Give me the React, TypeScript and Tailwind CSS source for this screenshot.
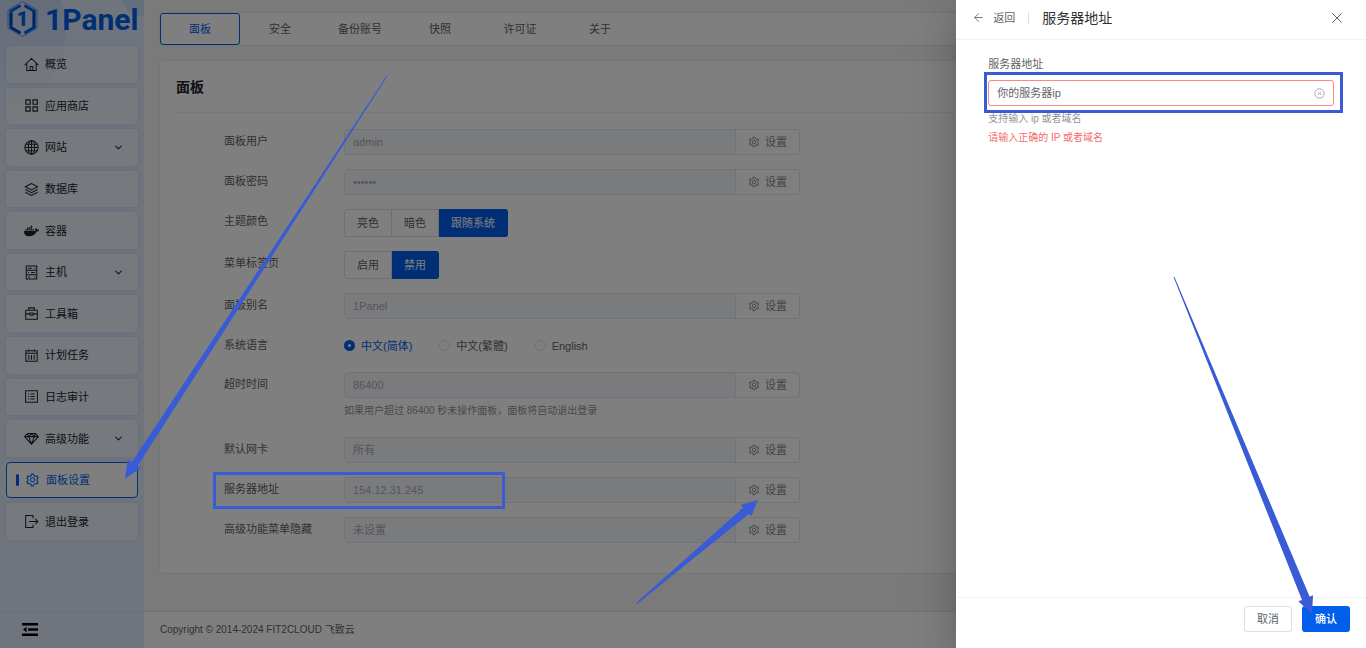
import React from 'react';
import { clsx } from 'clsx';
import { FaDocker } from 'react-icons/fa';
import { AiOutlineSetting } from 'react-icons/ai';
import { ArrowLeft, ChevronDown, X } from 'lucide-react';

const font = "font-['Liberation_Sans','Noto_Sans_CJK_SC',sans-serif]";

function Icon({ children, size = 15 }: { children: React.ReactNode; size?: number }) {
  return (
    <svg width={size} height={size} viewBox="0 0 16 16" fill="none" stroke="currentColor" strokeWidth="1.1" aria-hidden="true">
      {children}
    </svg>
  );
}

const icons: Record<string, React.ReactNode> = {
  home: <Icon><path d="M.7 8.6 8 1.6l7.3 7M3 7v7.4h10V7M6.6 14.2v-4h2.8v4" /></Icon>,
  apps: <Icon><path d="M2 2h4.6v4.6H2zM9.6 2h4.6v4.6H9.6zM2 9.4h4.6V14H2zM9.6 9.4h4.6V14H9.6z" strokeWidth="1.2" /></Icon>,
  site: (
    <Icon>
      <circle cx="8" cy="8" r="7.1" />
      <ellipse cx="8" cy="8" rx="3.4" ry="7.1" />
      <path d="M8 1v14M1 8h14M2 4.6h12M2 11.4h12" />
    </Icon>
  ),
  db: <Icon><path d="M8 1.6 1.4 5 8 8.4 14.6 5zM1.4 8 8 11.4 14.6 8M1.4 11 8 14.4 14.6 11" /></Icon>,
  docker: <FaDocker size={16} />,
  host: (
    <Icon>
      <path d="M2.4 1h11.2v14H2.4zM2.4 5.7h11.2M2.4 10.3h11.2M4.4 3.4h4M7.6 8h4M4.4 12.7h2M11 3.4h1M4.4 8h1M11 12.7h1" />
    </Icon>
  ),
  tools: (
    <Icon>
      <path d="M5 4.6V2h6v2.6M1.8 4.6h12.4v9.6H1.8zM1.8 8.4h4.6M9.6 8.4h4.6M6.4 7.4h3.2v2.4H6.4z" />
    </Icon>
  ),
  cron: <Icon><path d="M2 3h12v11.2H2zM2 5.6h12M5 1.6V4M11 1.6V4M5.2 7.4v5M8 7.4v5M10.8 7.4v5" /></Icon>,
  log: <Icon><path d="M1.7 1.8h12.6v12.4H1.7zM7 5.4h4.4M7 8h4.4M7 10.6h4.4M4.4 5.4h1.2M4.4 8h1.2M4.4 10.6h1.2" /></Icon>,
  pro: <Icon><path d="M3.6 2.6h8.8L15.4 6 8 14 .6 6zM.6 6h14.8M3.6 2.6 5 6l3 8 3-8 1.4-3.4M5 6l3-3.4L11 6" /></Icon>,
  setting: <AiOutlineSetting size={16} />,
  logout: <Icon><path d="M9.6 4.6V1.6H1.8v12.8h7.8v-3M5.6 8h9M12 5.2 14.8 8 12 10.8" /></Icon>,
};

const menu = [
  { label: '概览', icon: 'home' },
  { label: '应用商店', icon: 'apps' },
  { label: '网站', icon: 'site', sub: true },
  { label: '数据库', icon: 'db' },
  { label: '容器', icon: 'docker' },
  { label: '主机', icon: 'host', sub: true },
  { label: '工具箱', icon: 'tools' },
  { label: '计划任务', icon: 'cron' },
  { label: '日志审计', icon: 'log' },
  { label: '高级功能', icon: 'pro', sub: true },
  { label: '面板设置', icon: 'setting', active: true },
  { label: '退出登录', icon: 'logout' },
];

const tabs = ['面板', '安全', '备份账号', '快照', '许可证', '关于'];

function Logo() {
  return (
    <a href="#" className="flex h-[46px] items-start gap-[7px] pl-[7px] text-[#005eeb]">
      <svg width="31" height="38" viewBox="0 0 31 38" fill="none" aria-hidden="true">
        <path d="M15.5 1.5 30 10v18l-14.5 8.5L1 28V10z" stroke="#005eeb" strokeWidth=".6" />
        <path d="M17.5 5.5 27 11v16.5L17.5 33" stroke="#005eeb" strokeWidth="2.8" />
        <path d="M27 11v16.5" stroke="#0049b8" strokeWidth="2.8" />
        <path d="M13.5 5.5 4 11v14" stroke="#005eeb" strokeWidth="2.8" />
        <path d="M4 13v14.5l9.5 5.5" stroke="#0049b8" strokeWidth="2.8" />
        <text x="15.5" y="26" textAnchor="middle" fill="#005eeb" className="font-[Roboto] text-[20px] font-black">1</text>
      </svg>
      <span className="font-['Roboto',sans-serif] text-[30px] leading-10 font-bold">1Panel</span>
    </a>
  );
}

function Sidebar() {
  return (
    <aside className="relative flex w-36 shrink-0 flex-col overflow-hidden bg-[#e0e9f9]">
      <svg className="absolute inset-0" width="144" height="180" viewBox="0 0 144 180" aria-hidden="true">
        <defs>
          <linearGradient id="glow" x1="0" y1="0" x2="0" y2="1">
            <stop offset="0" stopColor="#bdd3f6" />
            <stop offset="1" stopColor="#c3d8f8" stopOpacity="0" />
          </linearGradient>
        </defs>
        <circle cx="-16" cy="30" r="82" fill="url(#glow)" />
        <circle cx="144" cy="-6" r="23" fill="#c9dcf9" />
      </svg>
      <div className="relative flex flex-1 flex-col">
        <Logo />
        <nav className="grid h-[494px] auto-rows-fr gap-[5px] px-1.5">
          {menu.map((item) => (
            <a
              key={item.label}
              href="#"
              className={clsx(
                'flex items-center rounded border pr-[13px] text-[11px]',
                item.active
                  ? 'border-[#005eeb] bg-white pl-[9px] text-[#005eeb]'
                  : 'border-transparent bg-white/40 pl-[17px] text-[#1f2329] shadow-[0_0_4px_rgba(0,94,235,0.1)]'
              )}
            >
              {item.active && <span className="mr-1.5 h-3 w-[3px] rounded-sm bg-[#005eeb]" />}
              <span className="mr-1.5 flex w-[15px] justify-center">{icons[item.icon]}</span>
              <span className="flex-1">{item.label}</span>
              {item.sub && <ChevronDown size={11} strokeWidth={2.2} />}
            </a>
          ))}
        </nav>
      </div>
      <div className="relative flex h-[37px] items-center border-t border-[#d9dee8] pl-[22px]">
        <button type="button" aria-label="折叠菜单" className="text-black">
          <svg width="16" height="14" viewBox="0 0 16 14" fill="currentColor" aria-hidden="true">
            <path d="M0 0h16v2.4H0zM6 5.3h10v2.4H6zM0 10.6h16V13H0zM4.5 3.8v5.4L1 6.5z" />
          </svg>
        </button>
      </div>
    </aside>
  );
}

function Field({ id, label, children }: { id?: string; label: string; children: React.ReactNode }) {
  return (
    <div className="mb-3.5 flex">
      <label htmlFor={id} className="w-[120px] shrink-0 leading-6 text-[#606266]">{label}</label>
      <div className="w-full max-w-[456px]">{children}</div>
    </div>
  );
}

function SettingInput({ id, label, value, type = 'text', help }: { id: string; label: string; value: string; type?: string; help?: string }) {
  return (
    <Field id={id} label={label}>
      <div className="flex h-[26px] rounded-[3px] border border-[#e4e7ed]">
        <input id={id} type={type} defaultValue={value} disabled className="min-w-0 flex-1 bg-[#f5f7fa] px-2 text-[#a8abb2]" />
        <button type="button" className="flex w-16 items-center justify-center gap-[5px] border-l border-[#e4e7ed] text-[#85888e]">
          <AiOutlineSetting size={12} />
          设置
        </button>
      </div>
      {help && <p className="h-[25px] pt-1 text-[10px] leading-[17px] text-[#909399]">{help}</p>}
    </Field>
  );
}

function Segmented({ name, label, options, value }: { name: string; label: string; options: string[]; value: string }) {
  return (
    <Field label={label}>
      <div className="flex h-7" role="radiogroup" aria-label={label}>
        {options.map((o, i) => (
          <label
            key={o}
            className={clsx(
              'relative flex items-center border-y border-r px-3',
              i === 0 && 'rounded-l-[3px] border-l',
              i === options.length - 1 && 'rounded-r-[3px]',
              o === value ? 'border-[#005eeb] bg-[#005eeb] text-white' : 'border-[#dcdfe6] text-[#606266]'
            )}
          >
            <input type="radio" name={name} defaultChecked={o === value} className="sr-only" />
            {o}
          </label>
        ))}
      </div>
    </Field>
  );
}

function Content() {
  return (
    <main className="flex min-w-0 flex-1 flex-col bg-[#f4f4f4]">
      <div className="flex-1 px-4 pt-[13px]">
        <div className="mb-4 flex h-8 rounded bg-white shadow-[0_0_3px_rgba(0,0,0,0.08)]">
          {tabs.map((t, i) => (
            <button
              key={t}
              type="button"
              className={clsx('w-20 rounded-[3px] border', i === 0 ? 'border-[#005eeb] text-[#005eeb]' : 'border-transparent text-[#606266]')}
            >
              {t}
            </button>
          ))}
        </div>
        <section className="rounded bg-white p-4 shadow-[0_0_3px_rgba(0,0,0,0.08)]">
          <h1 className="mb-4 border-b border-[#f2f2f2] pb-[15px] text-sm leading-5 font-bold text-[#1f2329]">面板</h1>
          <form className="pl-12">
            <SettingInput id="user" label="面板用户" value="admin" />
            <SettingInput id="password" label="面板密码" type="password" value="secret" />
            <Segmented name="theme" label="主题颜色" options={['亮色', '暗色', '跟随系统']} value="跟随系统" />
            <Segmented name="menuTabs" label="菜单标签页" options={['启用', '禁用']} value="禁用" />
            <SettingInput id="alias" label="面板别名" value="1Panel" />
            <Field label="系统语言">
              <div className="flex h-[25px] items-center gap-[27px]">
                {['中文(简体)', '中文(繁體)', 'English'].map((lang, i) => (
                  <label key={lang} className={clsx('flex items-center gap-1.5', i === 0 ? 'text-[#005eeb]' : 'text-[#606266]')}>
                    <input
                      type="radio"
                      name="lang"
                      defaultChecked={i === 0}
                      className="size-[11px] appearance-none rounded-full border border-[#dcdfe6] bg-white checked:border-4 checked:border-[#005eeb]"
                    />
                    {lang}
                  </label>
                ))}
              </div>
            </Field>
            <SettingInput id="timeout" label="超时时间" value="86400" help="如果用户超过 86400 秒未操作面板，面板将自动退出登录" />
            <SettingInput id="nic" label="默认网卡" value="所有" />
            <SettingInput id="address" label="服务器地址" value="154.12.31.245" />
            <SettingInput id="hidden" label="高级功能菜单隐藏" value="未设置" />
          </form>
        </section>
      </div>
      <footer className="flex h-[37px] items-center border-t border-[#e4e7ed] bg-white px-4 text-[10px] text-[#606266]">
        Copyright © 2014-2024 FIT2CLOUD 飞致云
      </footer>
    </main>
  );
}

function Drawer() {
  return (
    <div
      role="dialog"
      aria-label="服务器地址"
      className="absolute inset-y-0 right-0 z-20 flex w-[30%] flex-col bg-white shadow-[0_16px_48px_16px_rgba(0,0,0,0.08),0_12px_32px_rgba(0,0,0,0.12),0_8px_16px_-8px_rgba(0,0,0,0.16)]"
    >
      <header className="flex h-10 items-center border-b border-[#f2f2f2] pr-5 pb-1 pl-4">
        <button type="button" className="flex items-center gap-2 text-[#606266]">
          <ArrowLeft size={13} strokeWidth={1.6} />
          返回
        </button>
        <span className="mx-[13px] h-3 w-px bg-[#dcdfe6]" />
        <h2 className="flex-1 text-sm text-[#303133]">服务器地址</h2>
        <button type="button" aria-label="关闭" className="text-[#606266]">
          <X size={18} strokeWidth={1.3} />
        </button>
      </header>
      <div className="flex-1 px-8 pt-4">
        <label htmlFor="ip" className="block h-6 leading-4 text-[#606266]">服务器地址</label>
        <div className="relative flex h-[26px] items-center rounded-[3px] border border-[#f78989] pr-2">
          <input id="ip" type="text" defaultValue="你的服务器ip" className="min-w-0 flex-1 px-2 text-[#606266] outline-none" />
          <svg width="11" height="11" viewBox="0 0 11 11" fill="none" stroke="#a8abb2" aria-hidden="true">
            <circle cx="5.5" cy="5.5" r="4.7" />
            <path d="m4 4 3 3M7 4 4 7" />
          </svg>
          <span className="pointer-events-none absolute -top-[9px] -right-[10px] -bottom-2 -left-[5px] border-3 border-[#395bd6]" />
        </div>
        <p className="mt-1 text-[10px] leading-[18px] text-[#909399]">支持输入 ip 或者域名</p>
        <p className="text-[10px] leading-5 text-[#f56c6c]">请输入正确的 IP 或者域名</p>
      </div>
      <footer className="flex h-[51px] items-start justify-end gap-2.5 border-t border-[#f2f2f2] px-4 pt-2">
        <button type="button" className="h-[26px] w-12 rounded-[3px] border border-[#dcdfe6] text-[#606266]">取消</button>
        <button type="button" className="h-[26px] w-12 rounded-[3px] bg-[#005eeb] font-medium text-white">确认</button>
      </footer>
      <svg className="pointer-events-none absolute right-0 bottom-0" width="410" height="648" viewBox="956 0 410 648" fill="#395bd6" aria-hidden="true">
        <path d="M1173.5 277h1l135.200 319.700 3.300-1.400-1 18.700-13.700-12.700 3.700-1.300z" />
      </svg>
    </div>
  );
}

export default function App() {
  return (
    <div className={clsx('relative flex min-h-screen overflow-hidden text-[11px] leading-4', font)}>
      <Sidebar />
      <Content />
      <div className="absolute inset-0 z-10 bg-black/50" />
      <svg className="pointer-events-none absolute top-0 left-0 z-10" width="960" height="648" viewBox="0 0 960 648" fill="#395bd6" aria-hidden="true">
        <path d="M386.5 76 132 462 127.7 459.7 125 478.7 140.7 468.3 137.5 466 387.2 76.5z" />
        <path d="M636 603 743.3 507.5 740.7 505 758 500 751.3 516.3 749 513.7 637 604z" />
        <rect x="214.5" y="473.5" width="289" height="34" fill="none" stroke="#395bd6" strokeWidth="3" />
      </svg>
      <Drawer />
    </div>
  );
}
